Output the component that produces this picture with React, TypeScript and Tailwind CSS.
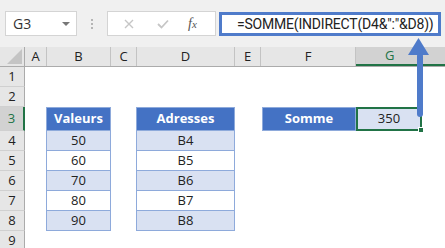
import React from 'react';

// Column widths in px, from the row header to the spill past G.
const cols = [
  { key: 'row', w: 'w-[25px]' },
  { key: 'A', w: 'w-[22px]' },
  { key: 'B', w: 'w-[64px]' },
  { key: 'C', w: 'w-[26px]' },
  { key: 'D', w: 'w-[98px]' },
  { key: 'E', w: 'w-[26px]' },
  { key: 'F', w: 'w-[95px]' },
  { key: 'G', w: 'w-[66px]' },
];

const values = ['50', '60', '70', '80', '90'];
const addresses = ['B4', 'B5', 'B6', 'B7', 'B8'];

export default function App() {
  return (
    <div
      className="relative w-[445px] h-[248px] overflow-hidden bg-white text-[13px] text-[#222]"
      style={{ fontFamily: '"Open Sans", "Liberation Sans", sans-serif' }}
    >
      <Toolbar />
      <ColumnHeaders />
      <Row n={1} h="h-[20px]" />
      <Row n={2} h="h-[20px]" />
      <Row n={3} h="h-[24px]" selected>
        {{
          B: <HeaderCell className="w-[65px] -ml-px">Valeurs</HeaderCell>,
          D: <HeaderCell className="w-[99px] -ml-px">Adresses</HeaderCell>,
          F: <HeaderCell className="w-[95px] ml-px">Somme</HeaderCell>,
          G: (
            <div className="relative w-[66px] h-full border-2 border-[#217346] bg-[#d9e1f2] flex items-center justify-center">
              350
              <span className="absolute -right-[4px] -bottom-[4px] w-[6px] h-[6px] bg-[#217346] border border-white" />
            </div>
          ),
        }}
      </Row>
      {values.map((v, i) => (
        <Row key={v} n={i + 4} h="h-[20px]">
          {{
            B: <BodyCell className="w-[65px] -ml-px" band={i % 2 === 0}>{v}</BodyCell>,
            D: <BodyCell className="w-[99px] -ml-px" band={i % 2 === 0}>{addresses[i]}</BodyCell>,
          }}
        </Row>
      ))}
      <Row n={9} h="h-[20px]" />

      {/* arrow pointing at the formula */}
      <svg className="absolute left-[406px] top-[36px]" width="28" height="84" viewBox="0 0 28 84">
        <path d="M12.5 2 L23 19 L2 19 Z" fill="#4f7bca" />
        <rect x="11" y="17" width="6" height="64" rx="3" fill="#4f7bca" />
      </svg>
    </div>
  );
}

function Toolbar() {
  return (
    <div className="h-[47px] bg-[#f0f0f0] flex items-start pt-[11px] pl-[5px]">
      <div className="w-[72px] h-[25px] bg-white border border-[#d4d4d4] flex items-center justify-between pl-[7px] pr-[6px]">
        <span className="text-[14px] text-[#333]">G3</span>
        <span className="w-0 h-0 border-x-[4px] border-x-transparent border-t-[4px] border-t-[#777]" />
      </div>
      <div className="w-[30px] h-[25px] flex flex-col items-center justify-center gap-[2px]">
        <span className="w-[2px] h-[2px] bg-[#b5b5b5]" />
        <span className="w-[2px] h-[2px] bg-[#b5b5b5]" />
        <span className="w-[2px] h-[2px] bg-[#b5b5b5]" />
      </div>
      <div className="w-[109px] h-[25px] bg-white border border-[#d4d4d4] flex items-center">
        <svg className="ml-[16px]" width="10" height="10" viewBox="0 0 10 10">
          <path d="M1 1 L9 9 M9 1 L1 9" stroke="#c6c6c6" strokeWidth="1.4" />
        </svg>
        <svg className="ml-[23px]" width="12" height="10" viewBox="0 0 12 10">
          <path d="M1 5 L4.5 8.5 L11 1.5" stroke="#c6c6c6" strokeWidth="1.8" fill="none" />
        </svg>
        <span
          className="ml-[19px] italic text-[14px] text-[#555]"
          style={{ fontFamily: '"Liberation Serif", serif' }}
        >
          f<span className="text-[11px]">x</span>
        </span>
      </div>
      <div
        className="ml-[3px] mt-[1px] w-[222px] h-[24px] bg-white border-[3px] border-[#4f7bca] flex items-center pl-[15px] text-[14px] text-[#222] tracking-[-0.2px] whitespace-nowrap overflow-hidden"
        style={{ fontFamily: 'Roboto, "Liberation Sans", sans-serif' }}
      >
        =SOMME(INDIRECT(D4&amp;":"&amp;D8))
      </div>
    </div>
  );
}

function ColumnHeaders() {
  return (
    <div className="h-[20px] flex bg-[#e6e6e6] border-b border-[#ababab]">
      <div className="w-[25px] h-full relative border-r border-[#ababab]">
        <span className="absolute right-[2px] bottom-[2px] w-0 h-0 border-l-[15px] border-l-transparent border-b-[15px] border-b-[#c4c4c4]" />
      </div>
      {cols.slice(1).map((c) =>
        c.key === 'G' ? (
          <div
            key={c.key}
            className="flex-1 h-full bg-[#d2d2d2] border-b-2 border-[#217346] flex items-center justify-start pl-[29px] text-[#217346]"
          >
            G
          </div>
        ) : (
          <div
            key={c.key}
            className={`${c.w} h-full border-r border-[#c3c3c3] flex items-center justify-center`}
          >
            {c.key}
          </div>
        )
      )}
    </div>
  );
}

function Row({
  n,
  h,
  selected,
  children,
}: {
  n: number;
  h: string;
  selected?: boolean;
  children?: Partial<Record<string, React.ReactNode>>;
}) {
  return (
    <div className={`${h} flex`}>
      <div
        className={`w-[25px] h-full flex items-center justify-center border-b border-[#d0d0d0] ${
          selected ? 'bg-[#d2d2d2] text-[#217346] border-r-2 border-r-[#217346]' : 'bg-[#e6e6e6] border-r border-r-[#ababab]'
        }`}
      >
        {n}
      </div>
      {cols.slice(1).map((c) => (
        <div key={c.key} className={`${c.w} h-full flex`}>
          {children?.[c.key]}
        </div>
      ))}
    </div>
  );
}

function HeaderCell({ className, children }: { className: string; children: React.ReactNode }) {
  return (
    <div
      className={`${className} h-full bg-[#4472c4] border border-[#8eaadb] text-white font-bold flex items-center justify-center`}
    >
      {children}
    </div>
  );
}

function BodyCell({
  className,
  band,
  children,
}: {
  className: string;
  band: boolean;
  children: React.ReactNode;
}) {
  return (
    <div
      className={`${className} h-full border-x border-b border-[#8eaadb] flex items-center justify-center ${
        band ? 'bg-[#d9e1f2]' : 'bg-white'
      }`}
    >
      {children}
    </div>
  );
}
